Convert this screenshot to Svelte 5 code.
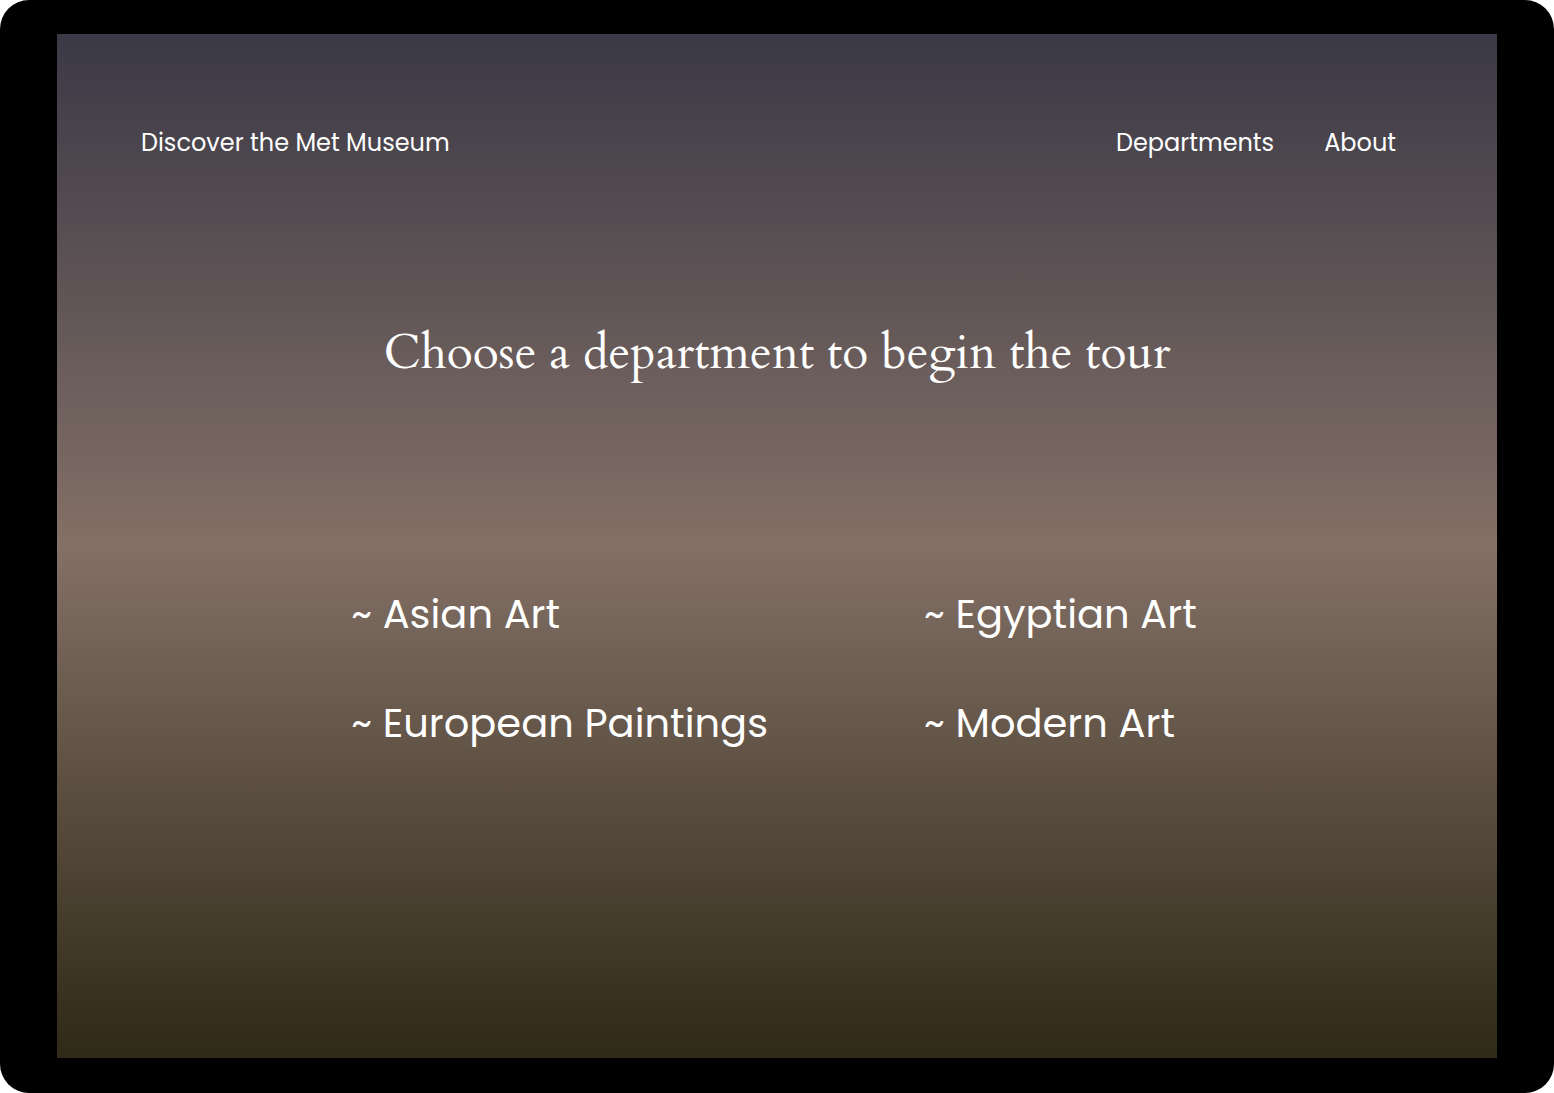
<script>
  const links = ['Departments', 'About'];
  const departments = ['Asian Art', 'Egyptian Art', 'European Paintings', 'Modern Art'];
</script>

<div class="frame">
  <div class="screen">
    <header>
      <a class="brand" href="#home">Discover the Met Museum</a>
      <nav aria-label="Main">
        {#each links as link}
          <a href={'#' + link.toLowerCase()}>{link}</a>
        {/each}
      </nav>
    </header>
    <main>
      <h1>Choose a department to begin the tour</h1>
      <ul>
        {#each departments as name}
          <li><a href={'#' + name.toLowerCase().replace(' ', '-')}>~ {name}</a></li>
        {/each}
      </ul>
    </main>
  </div>
</div>

<style>
  :global(body) {
    margin: 0;
    background: #fff;
  }

  .frame {
    box-sizing: border-box;
    display: flex;
    min-height: 100vh;
    padding: 34px 57px 35px;
    border-radius: 29px;
    background: #000;
  }

  .screen {
    flex: 1;
    color: #fff;
    font-family: Poppins, Inter, sans-serif;
    background: linear-gradient(#3b3946, #837066 50%, #2f2917);
  }

  header {
    display: flex;
    justify-content: space-between;
    padding: 91px 101px 0 84px;
    font-size: 24px;
    line-height: 36px;
  }

  nav {
    display: flex;
    gap: 50px;
  }

  a {
    color: inherit;
    text-decoration: none;
  }

  h1 {
    margin: 162px 0 0;
    font-family: Cardo, "Liberation Serif", serif;
    font-size: 48px;
    font-weight: 400;
    line-height: 60px;
    text-align: center;
  }

  ul {
    display: grid;
    grid-template-columns: max-content max-content;
    justify-content: center;
    gap: 49px 156px;
    margin: 201px 0 0;
    padding: 0 6px 0 0;
    list-style: none;
    font-size: 40px;
    line-height: 60px;
  }
</style>
